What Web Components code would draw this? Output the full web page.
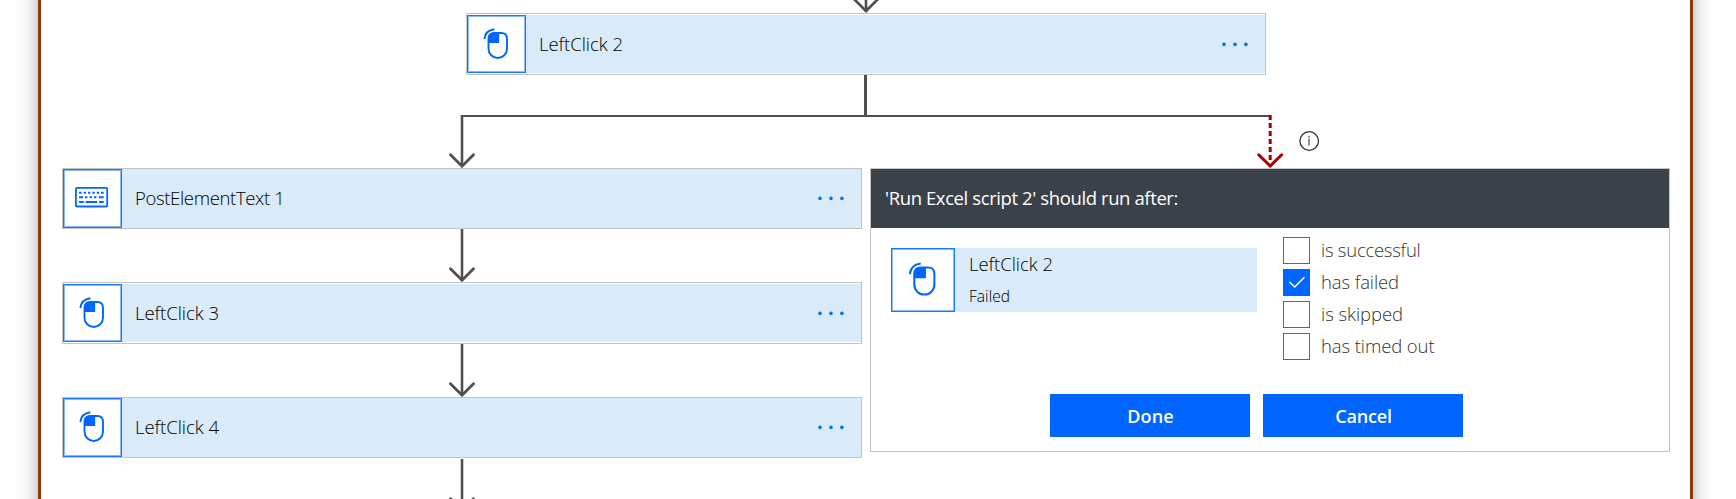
<!DOCTYPE html>
<html lang="en">
<head>
<meta charset="utf-8">
<title>Flow designer</title>
<style>
html,body{margin:0;background:#fff;height:499px;overflow:hidden}
body{font-family:"Open Sans","Noto Sans",sans-serif;font-size:18.5px}
</style>
</head>
<body>
<flow-frame>
  <flow-arrow kind="in"></flow-arrow>
  <action-card class="root" icon="mouse" label="LeftClick 2" span="84" roomy></action-card>
  <flow-branch></flow-branch>
  <flow-columns>
    <flow-lane slot="left">
      <action-card icon="keyboard" label="PostElementText 1" span="149.5"></action-card>
      <flow-arrow></flow-arrow>
      <action-card icon="mouse" label="LeftClick 3" span="84" roomy></action-card>
      <flow-arrow></flow-arrow>
      <action-card icon="mouse" label="LeftClick 4" span="84"></action-card>
      <flow-arrow kind="out"></flow-arrow>
    </flow-lane>
    <run-after-panel slot="right">
      <fit-text slot="title" span="293">'Run Excel script 2' should run after:</fit-text>
      <source-action slot="source"></source-action>
      <check-row slot="checks" span="99.5">is successful</check-row>
      <check-row slot="checks" span="78" checked>has failed</check-row>
      <check-row slot="checks" span="82">is skipped</check-row>
      <check-row slot="checks" span="113.5">has timed out</check-row>
      <push-button slot="buttons" span="46.5">Done</push-button>
      <push-button slot="buttons" span="56.5">Cancel</push-button>
    </run-after-panel>
  </flow-columns>
</flow-frame>
<script>
const define = (name, render, after) => customElements.define(name, class extends HTMLElement {
  connectedCallback() {
    if (this.shadowRoot) return;
    this.attachShadow({ mode: 'open' }).innerHTML = render(this);
    if (after) after(this);
  }
});

// Text tracked so that it takes `span` pixels on its line.
define('fit-text', () => `
  <style>:host{display:inline-block;white-space:nowrap;line-height:1.36}</style><slot></slot>`,
  el => {
    const span = parseFloat(el.getAttribute('span'));
    const natural = el.getBoundingClientRect().width;
    el.style.letterSpacing = ((span - natural) / el.textContent.length).toFixed(3) + 'px';
  });

const MOUSE = `<g fill="none" stroke="#0066ff" stroke-width="1.9">
  <path d="M27.5 18H34.3Q40 18 40 24V33.7A9.2 9.2 0 0 1 21.5 33.7V24Q21.5 18 27.5 18Z"/>
  <path d="M17.4 24.2Q18.2 15.5 27.4 14.3"/></g>
  <path fill="#0066ff" d="M32.2 17.5H27Q21 17.5 21 24V28H32.2Z"/>`;
const KEYBOARD = `<rect x="12.9" y="18.9" width="31.3" height="18.6" rx="1" fill="none" stroke="#0066ff" stroke-width="1.8"/>
  <path stroke="#0066ff" stroke-width="2" d="M16 23.7h2.6M20.7 23.7h2.3M25 23.7h2.4M29.4 23.7h2.4M33.8 23.7h2.4M38 23.7h2.7M16 28.3h4M22 28.3h2.4M26.6 28.3h2.4M31 28.3h2.4M36 28.3h4.7M16 33h4.8M22.6 33h11.6M36 33h4.7"/>`;

define('action-icon', el => `
  <style>
    :host{display:block;flex:none;background:#fff;box-sizing:border-box;border:1px solid #1a75ff;box-shadow:inset 0 0 0 1px #8bb8fb;overflow:hidden}
    svg{display:block;width:calc(100% + 2px);margin:-1px}
  </style>
  <svg viewBox="0 0 59 59">${el.getAttribute('icon') === 'keyboard' ? KEYBOARD : MOUSE}</svg>`);

define('action-card', el => {
  const roomy = el.hasAttribute('roomy');
  return `
  <style>
    :host{display:block;width:800px;height:${roomy ? 62 : 61}px;box-sizing:border-box;border:1px solid #c3c3c3;padding:${roomy ? 1 : 0}px 0;background:#fff}
    :host(.root){margin:0 auto}
    .row{display:flex;align-items:center;height:100%;background:#d9eaf8}
    action-icon{width:59px;height:100%}
    fit-text{margin-left:13px;font-size:18.5px;font-weight:350;color:#000;margin-bottom:1px}
    svg{margin-left:auto;margin-right:16px;margin-bottom:1px}
  </style>
  <div class="row">
    <action-icon icon="${el.getAttribute('icon')}"></action-icon>
    <fit-text span="${el.getAttribute('span')}">${el.getAttribute('label')}</fit-text>
    <svg width="28" height="6" viewBox="0 0 28 6" fill="#0078d7"><circle cx="3" cy="3.4" r="1.8"/><circle cx="14" cy="3.4" r="1.8"/><circle cx="24.9" cy="3.4" r="1.8"/></svg>
  </div>`;
});

define('flow-arrow', el => {
  const kind = el.getAttribute('kind');
  const h = kind === 'in' ? 13 : 53, tip = kind === 'out' ? 52.5 : h - (kind === 'in' ? 1.6 : 1.4);
  return `
  <style>:host{display:block}svg{display:block;margin:0 auto}</style>
  <svg width="30" height="${h}" fill="none" stroke="#505050" stroke-width="2.6">
    <path d="M15 ${kind === 'out' ? 1 : 0}V${tip}"/>
    <path stroke-width="2.8" stroke-linecap="round" d="M3.5 ${tip - 11.8}L15 ${tip - .4}L26.5 ${tip - 11.8}"/>
  </svg>`;
});

define('flow-branch', () => `
  <style>:host{display:block}svg{display:block}</style>
  <svg width="1608" height="93" fill="none">
    <path stroke="#505050" stroke-width="3" d="M803.5 0V41"/>
    <path stroke="#505050" stroke-width="2" d="M399 41H1208"/>
    <path stroke="#505050" stroke-width="2.6" d="M400 40V91"/>
    <path stroke="#505050" stroke-width="2.8" stroke-linecap="round" d="M388.5 79.8L400 91.2L411.5 79.8"/>
    <path stroke="#a80000" stroke-width="3" stroke-dasharray="5 3" d="M1208.2 40V88"/>
    <path stroke="#a80000" stroke-width="3" stroke-linecap="round" d="M1196.7 79.8L1208.2 91L1219.7 79.8"/>
    <circle cx="1247.2" cy="66" r="9.3" stroke="#333" stroke-width="1.3"/>
    <path stroke="#555" stroke-width="1.3" d="M1247 63.8V70.5M1247 61V62.4"/>
  </svg>`);

define('flow-columns', () => `
  <style>:host{display:grid;grid-template-columns:800px 800px;column-gap:8px;align-items:start}</style>
  <slot name="left"></slot><slot name="right"></slot>`);

define('flow-lane', () => `<style>:host{display:flex;flex-direction:column}</style><slot></slot>`);

define('run-after-panel', () => `
  <style>
    :host{display:flex;flex-direction:column;box-sizing:border-box;height:284px;border:1px solid #c3c3c3;background:#fff}
    header{height:58px;padding-bottom:1px;display:flex;align-items:center;padding-left:14px;background:#3b4149;color:#fff;font-weight:400}
    .body{display:flex;padding:9px 0 0 20px}
    .source{margin:11px 26px 0 0}
    .checks{display:flex;flex-direction:column;gap:5px}
    footer{display:flex;gap:13px;padding:34px 0 0 179px}
  </style>
  <header><slot name="title"></slot></header>
  <div class="body"><div class="source"><slot name="source"></slot></div><div class="checks"><slot name="checks"></slot></div></div>
  <footer><slot name="buttons"></slot></footer>`);

define('source-action', () => `
  <style>
    :host{display:flex;width:366px;height:64px;background:#d9eaf8;color:#000;font-weight:350}
    action-icon{width:64px;height:64px}
    .text{display:flex;flex-direction:column;align-items:flex-start;padding:3px 0 0 14px}
    .name{font-size:18.5px}
    .state{font-size:15.5px;margin-top:10px}
  </style>
  <action-icon icon="mouse"></action-icon>
  <div class="text"><fit-text class="name" span="84">LeftClick 2</fit-text><fit-text class="state" span="41">Failed</fit-text></div>`);

define('check-row', el => {
  const on = el.hasAttribute('checked');
  return `
  <style>
    :host{display:flex;align-items:center;height:27px;color:#333;font-size:18.5px;font-weight:350}
    .box{width:27px;height:27px;box-sizing:border-box;border:1px solid ${on ? '#0066ff' : '#666'};background:${on ? '#0066ff' : '#fff'};margin-right:11px}
    svg{display:block}
    fit-text{margin-bottom:2px}
  </style>
  <div class="box">${on ? '<svg width="25" height="25" fill="none" stroke="#fff" stroke-width="1.6"><path d="M5.5 12L10.7 17L20.5 7.2"/></svg>' : ''}</div>
  <fit-text span="${el.getAttribute('span')}">${el.textContent}</fit-text>`;
});

define('push-button', el => `
  <style>
    :host{display:block}
    button{display:flex;align-items:center;justify-content:center;width:200px;height:43px;border:0;padding:2px 0 0 1px;background:#0066ff;color:#fff;font:600 18px "Open Sans","Noto Sans",sans-serif}
  </style>
  <button><fit-text span="${el.getAttribute('span')}">${el.textContent}</fit-text></button>`);

// The frame runs past both ends of the window, so its side shadows stay even.
define('flow-frame', () => `
  <style>
    :host{display:block;overflow:hidden;height:499px;padding:0 43px 0 38px}
    .frame{box-sizing:border-box;height:579px;margin-top:-40px;padding:40px 20px 40px 21px;border:solid #8e3a00;border-width:0 3px;background:#fff;box-shadow:0 0 18px rgba(0,0,0,.34)}
  </style>
  <div class="frame"><slot></slot></div>`);
</script>
</body>
</html>
